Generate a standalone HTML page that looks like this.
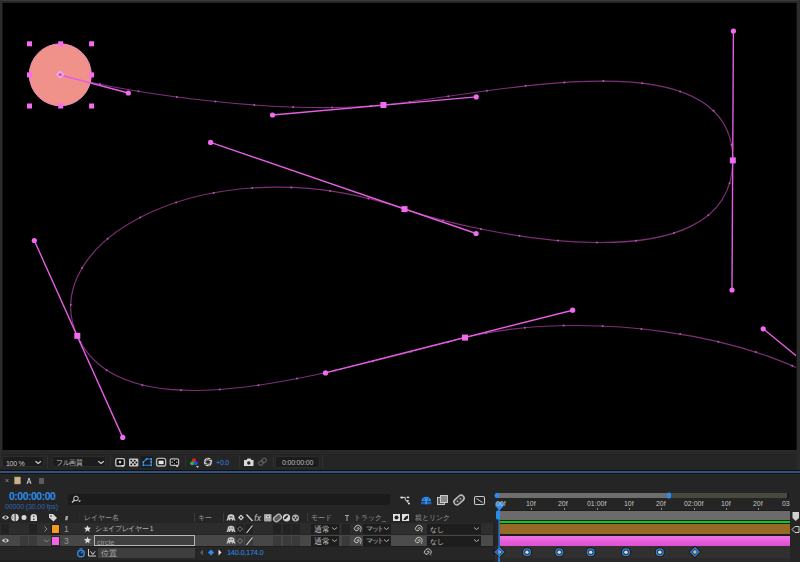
<!DOCTYPE html>
<html><head><meta charset="utf-8">
<style>
*{margin:0;padding:0;box-sizing:border-box}
html,body{width:800px;height:562px;overflow:hidden;background:#252525;font-family:"Liberation Sans",sans-serif;color:#a0a0a0;font-size:9px}
.a{position:absolute}
#vp{left:0;top:0;width:800px;height:450px;background:#262626;border-top:1px solid #393939;border-left:2px solid #2c2c2c;border-right:3px solid #2c2c2c}
#vpin{left:3px;top:3px;width:793px;height:447px;background:#000;box-shadow:-1px 0 0 #161616,1px 0 0 #121212}
svg{position:absolute;left:0;top:0}
.fld{position:absolute;background:#1c1c1c;border:1px solid #2c2c2c;border-radius:2px}
.sep{position:absolute;width:1px;background:#303030}
.t{position:absolute;white-space:nowrap;line-height:1}
</style></head><body>
<div id="vp" class="a"></div>
<div id="vpin" class="a"></div>
<svg width="800" height="450" viewBox="0 0 800 450">
  <defs><clipPath id="c"><rect x="3" y="3" width="793" height="447"/></clipPath></defs>
  <g clip-path="url(#c)">
  <!-- motion path -->
  <path d="M60.5,75 C128.3,93 272.5,115 383.4,105 C476.25,96.9 733.4,31 732.8,160.4 C732,290 476.1,233.5 404.5,209.1 C210.6,142.4 34.3,240.5 77.3,335.8 C122.7,437.4 325.5,372.9 465,337.6 C572.6,310.2 763.2,328.8 850,400" fill="none" stroke="#7e2f78" stroke-width="1.15"/>
  <g fill="#b45aae"><circle cx="100.0" cy="84.1" r="1"/><circle cx="138.3" cy="91.2" r="1"/><circle cx="176.8" cy="96.9" r="1"/><circle cx="215.5" cy="101.5" r="1"/><circle cx="254.3" cy="104.9" r="1"/><circle cx="293.2" cy="107.0" r="1"/><circle cx="332.1" cy="107.5" r="1"/><circle cx="371.0" cy="106.0" r="1"/><circle cx="409.8" cy="101.9" r="1"/><circle cx="448.3" cy="96.3" r="1"/><circle cx="486.9" cy="90.7" r="1"/><circle cx="525.6" cy="85.8" r="1"/><circle cx="564.3" cy="82.4" r="1"/><circle cx="603.3" cy="81.1" r="1"/><circle cx="642.1" cy="83.2" r="1"/><circle cx="680.1" cy="91.4" r="1"/><circle cx="713.5" cy="110.8" r="1"/><circle cx="731.5" cy="144.7" r="1"/><circle cx="729.6" cy="183.2" r="1"/><circle cx="708.3" cy="215.2" r="1"/><circle cx="674.0" cy="233.0" r="1"/><circle cx="635.9" cy="240.7" r="1"/><circle cx="597.0" cy="242.5" r="1"/><circle cx="558.1" cy="240.5" r="1"/><circle cx="519.4" cy="235.8" r="1"/><circle cx="481.0" cy="229.0" r="1"/><circle cx="443.1" cy="220.4" r="1"/><circle cx="405.7" cy="209.5" r="1"/><circle cx="368.4" cy="198.5" r="1"/><circle cx="330.1" cy="191.1" r="1"/><circle cx="291.3" cy="187.5" r="1"/><circle cx="252.4" cy="188.0" r="1"/><circle cx="213.7" cy="192.9" r="1"/><circle cx="176.1" cy="202.4" r="1"/><circle cx="140.2" cy="217.4" r="1"/><circle cx="107.7" cy="238.8" r="1"/><circle cx="82.1" cy="267.9" r="1"/><circle cx="70.8" cy="304.7" r="1"/><circle cx="80.4" cy="342.0" r="1"/><circle cx="106.6" cy="370.3" r="1"/><circle cx="142.4" cy="385.2" r="1"/><circle cx="180.9" cy="390.2" r="1"/><circle cx="219.8" cy="389.5" r="1"/><circle cx="258.5" cy="385.2" r="1"/><circle cx="296.9" cy="378.6" r="1"/><circle cx="335.0" cy="370.5" r="1"/><circle cx="372.9" cy="361.4" r="1"/><circle cx="410.6" cy="351.7" r="1"/><circle cx="448.3" cy="341.9" r="1"/><circle cx="486.2" cy="333.0" r="1"/><circle cx="524.8" cy="327.8" r="1"/><circle cx="563.6" cy="325.6" r="1"/><circle cx="602.7" cy="326.1" r="1"/><circle cx="641.4" cy="328.9" r="1"/><circle cx="680.1" cy="334.1" r="1"/><circle cx="718.3" cy="341.7" r="1"/><circle cx="755.8" cy="352.1" r="1"/><circle cx="792.2" cy="365.8" r="1"/></g>
  <!-- circle -->
  <circle cx="60.3" cy="74.8" r="31" fill="#f0918a" stroke="#f08cc8" stroke-width="1"/>
  <!-- handle lines -->
  <g stroke="#e35ee0" stroke-width="1.4" fill="none">
    <line x1="60.5" y1="75" x2="128.3" y2="93"/>
    <line x1="272.5" y1="115" x2="476.25" y2="96.9"/>
    <line x1="733.4" y1="31" x2="732" y2="290"/>
    <line x1="210.6" y1="142.4" x2="476.1" y2="233.5"/>
    <line x1="34.3" y1="240.5" x2="122.7" y2="437.4"/>
    <line x1="325.5" y1="372.9" x2="572.6" y2="310.2"/>
    <line x1="763.2" y1="328.8" x2="850" y2="400"/>
  </g>
  <g fill="#f26af0">
    <circle cx="128.3" cy="93" r="2.6"/>
    <circle cx="272.5" cy="115" r="2.6"/>
    <circle cx="476.25" cy="96.9" r="2.6"/>
    <circle cx="733.4" cy="31" r="2.6"/>
    <circle cx="732" cy="290" r="2.6"/>
    <circle cx="210.6" cy="142.4" r="2.6"/>
    <circle cx="476.1" cy="233.5" r="2.6"/>
    <circle cx="34.3" cy="240.5" r="2.6"/>
    <circle cx="122.7" cy="437.4" r="2.6"/>
    <circle cx="325.5" cy="372.9" r="2.6"/>
    <circle cx="572.6" cy="310.2" r="2.6"/>
    <circle cx="763.2" cy="328.8" r="2.6"/>
    <rect x="380.4" y="102" width="6" height="6"/>
    <rect x="729.8" y="157.4" width="6" height="6"/>
    <rect x="401.5" y="206.1" width="6" height="6"/>
    <rect x="74.3" y="332.8" width="6" height="6"/>
    <rect x="462" y="334.6" width="6" height="6"/>
  </g>
  <!-- bbox handles -->
  <g fill="#f56cf2">
    <rect x="27" y="41.3" width="5" height="5"/>
    <rect x="58.2" y="41.3" width="5" height="5"/>
    <rect x="89.1" y="41.3" width="5" height="5"/>
    <rect x="27" y="72.4" width="5" height="5"/>
    <rect x="89.1" y="72.4" width="5" height="5"/>
    <rect x="27" y="103.5" width="5" height="5"/>
    <rect x="58.2" y="103.5" width="5" height="5"/>
    <rect x="89.1" y="103.5" width="5" height="5"/>
  </g>
  <path d="M60.2,70.6 l4,4 l-4,4 l-4,-4 z" fill="#eab0ee" stroke="#e8a0e8" stroke-width="0.6" stroke-linejoin="round"/><circle cx="60.2" cy="74.6" r="1.6" fill="#c84cc8"/>
  </g>
</svg>

<!-- viewer toolbar -->
<div class="a" style="left:0;top:450px;width:800px;height:21px;background:#252525;border-top:4px solid #282828"></div>
<div class="a" style="left:0;top:454px;width:800px;height:1px;background:#222"></div>
<div class="a" style="left:0;top:470px;width:800px;height:1px;background:#150e0a"></div>
<div class="a" style="left:0;top:473px;width:800px;height:1px;background:#16120e"></div>
<div class="a" style="left:0;top:450px;width:2px;height:18px;background:#2b2b2b"></div>
<div class="fld" style="left:2px;top:456px;width:42px;height:11px"></div>
<div class="t" style="left:6px;top:460px;font-size:7px;letter-spacing:-0.3px;color:#c8c8c8">100 %</div>
<div class="fld" style="left:52px;top:456px;width:54px;height:11px"></div>
<div class="t" style="left:56px;top:459px;font-size:7px;letter-spacing:-0.3px;color:#c8c8c8">フル画質</div>
<div class="a" style="left:141px;top:456px;width:12px;height:12px;background:#1b1b1b;border-radius:2px"></div>
<div class="t" style="left:216px;top:459px;font-size:7px;color:#2d8ceb;letter-spacing:-0.2px">+0.0</div>
<div class="fld" style="left:275px;top:456px;width:45px;height:12px"></div>
<div class="t" style="left:282px;top:459px;font-size:7px;color:#bdbdbd;letter-spacing:-0.2px">0:00:00:00</div>
<div class="a" style="left:0;top:471px;width:800px;height:2px;background:#2b5386"></div>

<!-- timeline panel top -->
<div class="t" style="left:9px;top:491px;font-size:10.5px;font-weight:bold;color:#2d8ceb;letter-spacing:-0.5px">0:00:00:00</div>
<div class="t" style="left:5px;top:503px;font-size:7.2px;color:#2a66b0;letter-spacing:-0.2px">00000 (30.00 fps)</div>
<div class="a" style="left:68px;top:494px;width:322px;height:11px;background:#1b1b1b;border-radius:2px"></div>

<!-- layer table header -->
<div class="t" style="left:84px;top:514px;font-size:7px;color:#9a9a9a">レイヤー名</div>
<div class="t" style="left:198px;top:514px;font-size:7px;color:#9a9a9a">キー</div>
<div class="t" style="left:311px;top:514px;font-size:7px;color:#9a9a9a">モード</div>
<div class="t" style="left:354px;top:514px;font-size:7px;color:#9a9a9a">トラック_</div>
<div class="t" style="left:415px;top:514px;font-size:7px;color:#9a9a9a">親とリンク</div>

<!-- row 1 -->
<div class="a" style="left:0;top:523px;width:493px;height:11px;background:#2c2c2c"></div>
<div class="a" style="left:1px;top:524px;width:8px;height:10px;background:#222"></div>
<div class="a" style="left:29px;top:524px;width:8px;height:10px;background:#222"></div>
<div class="a" style="left:51px;top:524px;width:9px;height:10px;background:#f29b1e;border:1px solid #1a1a1a"></div>
<div class="t" style="left:64px;top:525px;font-size:8.5px;color:#9a9a9a">1</div>
<div class="t" style="left:95px;top:526px;font-size:6.8px;letter-spacing:-0.35px;color:#b8b8b8">シェイプレイヤー 1</div>
<div class="a" style="left:236px;top:524px;width:8px;height:10px;background:#222"></div>
<div class="a" style="left:245px;top:524px;width:8px;height:10px;background:#222"></div>
<div class="a" style="left:273px;top:524px;width:8px;height:10px;background:#222"></div>
<div class="a" style="left:283px;top:524px;width:8px;height:10px;background:#222"></div>
<div class="a" style="left:292px;top:524px;width:8px;height:10px;background:#222"></div>
<div class="a" style="left:311px;top:524px;width:28px;height:10px;background:#1d1d1d"></div>
<div class="t" style="left:314px;top:525.5px;font-size:7.5px;color:#c0c0c0">通常</div>
<div class="a" style="left:342px;top:524px;width:8px;height:10px;background:#222"></div>
<div class="a" style="left:363px;top:524px;width:28px;height:10px;background:#1d1d1d"></div>
<div class="t" style="left:366px;top:525px;font-size:7px;letter-spacing:-1.5px;color:#c0c0c0">マット</div>
<div class="a" style="left:391px;top:524px;width:35px;height:10px;background:#2f2f2f"></div>
<div class="a" style="left:427px;top:524px;width:54px;height:10px;background:#1d1d1d"></div>
<div class="t" style="left:430px;top:526px;font-size:7px;color:#c0c0c0">なし</div>
<div class="a" style="left:481px;top:524px;width:12px;height:10px;background:#2e2e2e"></div>

<!-- row 2 -->
<div class="a" style="left:0;top:535px;width:493px;height:11px;background:#474747"></div>
<div class="a" style="left:20px;top:536px;width:8px;height:10px;background:#3a3a3a"></div>
<div class="a" style="left:29px;top:536px;width:8px;height:10px;background:#3a3a3a"></div>
<div class="a" style="left:51px;top:536px;width:9px;height:10px;background:#f066e6;border:1px solid #2a2a2a"></div>
<div class="t" style="left:64px;top:537px;font-size:8.5px;color:#9a9a9a">3</div>
<div class="a" style="left:94px;top:535px;width:101px;height:11px;border:1px solid #b8b8b8;background:#404040"></div>
<div class="t" style="left:97px;top:538.5px;font-size:7.5px;color:#9a9a9a">circle</div>
<div class="a" style="left:236px;top:536px;width:8px;height:10px;background:#3a3a3a"></div>
<div class="a" style="left:245px;top:536px;width:8px;height:10px;background:#3a3a3a"></div>
<div class="a" style="left:273px;top:536px;width:8px;height:10px;background:#3a3a3a"></div>
<div class="a" style="left:283px;top:536px;width:8px;height:10px;background:#3a3a3a"></div>
<div class="a" style="left:292px;top:536px;width:8px;height:10px;background:#3a3a3a"></div>
<div class="a" style="left:311px;top:536px;width:28px;height:10px;background:#1d1d1d"></div>
<div class="t" style="left:314px;top:537.5px;font-size:7.5px;color:#c0c0c0">通常</div>
<div class="a" style="left:342px;top:536px;width:8px;height:10px;background:#3a3a3a"></div>
<div class="a" style="left:363px;top:536px;width:28px;height:10px;background:#1d1d1d"></div>
<div class="t" style="left:366px;top:537px;font-size:7px;letter-spacing:-1.5px;color:#c0c0c0">マット</div>
<div class="a" style="left:391px;top:536px;width:35px;height:10px;background:#4c4c4c"></div>
<div class="a" style="left:427px;top:536px;width:54px;height:10px;background:#1d1d1d"></div>
<div class="t" style="left:430px;top:538px;font-size:7px;color:#c0c0c0">なし</div>
<div class="a" style="left:481px;top:536px;width:12px;height:10px;background:#4a4a4a"></div>

<!-- row 3 -->
<div class="a" style="left:0;top:546px;width:493px;height:14px;background:#262626;border-top:1px solid #1e1e1e"></div>
<div class="a" style="left:0;top:560px;width:493px;height:2px;background:#1f1f1f"></div>
<div class="a" style="left:98px;top:548px;width:97px;height:10px;background:#3e3e3e"></div>
<div class="t" style="left:101px;top:550px;font-size:7.5px;color:#b8b8b8">位置</div>
<div class="t" style="left:227px;top:549px;font-size:7.5px;color:#2d8ceb;letter-spacing:-0.3px">140.0,174.0</div>

<!-- timeline -->
<div class="a" style="left:493px;top:523px;width:3px;height:39px;background:#222"></div>
<div class="a" style="left:499px;top:493px;width:170px;height:5px;background:#6e6e6e"></div>
<div class="a" style="left:669px;top:493px;width:118px;height:5px;background:#4a4740"></div>
<div class="a" style="left:787px;top:493px;width:2px;height:6px;background:#1a1a1a"></div>
<div class="a" style="left:500px;top:510px;width:290px;height:37px;background:#1b1e1b"></div>
<div class="a" style="left:500px;top:511px;width:290px;height:9px;background:#6b6b6b"></div>
<div class="a" style="left:500px;top:521px;width:290px;height:2px;background:#0bcc1a"></div>
<div class="a" style="left:500px;top:524px;width:290px;height:10px;background:#976826"></div>
<div class="a" style="left:500px;top:536px;width:290px;height:10px;background:linear-gradient(#ee74e6,#e45ad6 60%,#e050d6)"></div>
<div class="a" style="left:495px;top:546px;width:295px;height:12px;background:#303030"></div>
<div class="a" style="left:495px;top:558px;width:295px;height:4px;background:#2a2a2a"></div>
<div class="a" style="left:790px;top:474px;width:10px;height:88px;background:#252525"></div>
<div class="a" style="left:797px;top:450px;width:3px;height:20px;background:#2a2a2a"></div>
<div class="t" style="left:496px;top:499.5px;font-size:8px;color:#c4c4c4;letter-spacing:0;transform:scaleX(0.87);transform-origin:0 0;z-index:2">00f</div>
<div class="t" style="left:526px;top:499.5px;font-size:8px;color:#c4c4c4;letter-spacing:0;transform:scaleX(0.87);transform-origin:0 0">10f</div>
<div class="t" style="left:558px;top:499.5px;font-size:8px;color:#c4c4c4;letter-spacing:0;transform:scaleX(0.87);transform-origin:0 0">20f</div>
<div class="t" style="left:587px;top:499.5px;font-size:8px;color:#c4c4c4;letter-spacing:0;transform:scaleX(0.87);transform-origin:0 0">01:00f</div>
<div class="t" style="left:624px;top:499.5px;font-size:8px;color:#c4c4c4;letter-spacing:0;transform:scaleX(0.87);transform-origin:0 0">10f</div>
<div class="t" style="left:656px;top:499.5px;font-size:8px;color:#c4c4c4;letter-spacing:0;transform:scaleX(0.87);transform-origin:0 0">20f</div>
<div class="t" style="left:684px;top:499.5px;font-size:8px;color:#c4c4c4;letter-spacing:0;transform:scaleX(0.87);transform-origin:0 0">02:00f</div>
<div class="t" style="left:721px;top:499.5px;font-size:8px;color:#c4c4c4;letter-spacing:0;transform:scaleX(0.87);transform-origin:0 0">10f</div>
<div class="t" style="left:753px;top:499.5px;font-size:8px;color:#c4c4c4;letter-spacing:0;transform:scaleX(0.87);transform-origin:0 0">20f</div>
<div class="t" style="left:782px;top:499.5px;font-size:8px;color:#c4c4c4;letter-spacing:0;transform:scaleX(0.87);transform-origin:0 0">03</div>

<svg width="800" height="112" viewBox="0 450 800 112" style="top:450px">
  <!-- separators toolbar -->
  <g fill="#303030">
    <rect x="47" y="455" width="1" height="13"/><rect x="110" y="455" width="1" height="13"/><rect x="185" y="455" width="1" height="13"/>
    <rect x="239" y="455" width="1" height="13"/><rect x="273" y="455" width="1" height="13"/>
    <rect x="322" y="455" width="1" height="13"/>
  </g>
  <g stroke="#d0d0d0" fill="none" stroke-width="1.15">
    <!-- dropdown chevrons -->
    <path d="M35.5,461.3 l2.7,2.2 l2.7,-2.2"/>
    <path d="M98.3,461.3 l2.7,2.2 l2.7,-2.2"/>
  </g>
  <rect x="115.8" y="458.6" width="8.6" height="7.4" rx="1.6" fill="#0c0c0c" stroke="#c4c4c4" stroke-width="1.4"/>
  <path d="M120,460.5 l1.6,1.6 l-1.6,1.6 l-1.6,-1.6 z" fill="#e0e0e0"/>
  <path d="M121,465 h3.6 l-1.8,2.1 z" fill="#e8e8e8"/>
  <rect x="129" y="458.5" width="9.3" height="8" rx="1.2" fill="#c8c8c8"/>
  <g fill="#0c0c0c"><circle cx="131.3" cy="460.6" r="0.95"/><circle cx="134.8" cy="460.6" r="0.95"/><circle cx="133" cy="462.5" r="0.95"/><circle cx="136.5" cy="462.5" r="0.95"/><circle cx="131.3" cy="464.4" r="0.95"/><circle cx="134.8" cy="464.4" r="0.95"/></g>
  <path d="M143.3,465.3 v-3.3 l3.3,-3 h4.6 v6.3 z" fill="none" stroke="#2d8ceb" stroke-width="1.1"/>
  <g fill="#3f9af5"><circle cx="143.3" cy="462" r="0.9"/><circle cx="146.6" cy="459" r="0.9"/><circle cx="151.2" cy="459" r="0.9"/><circle cx="151.2" cy="462" r="0.9"/><circle cx="151.2" cy="465.3" r="0.9"/><circle cx="143.3" cy="465.3" r="0.9"/></g>
  <rect x="156.6" y="458.4" width="9" height="7.6" rx="1.8" fill="#0c0c0c" stroke="#b8b8b8" stroke-width="1.4"/>
  <rect x="158.6" y="460.6" width="5" height="3.6" fill="#e8e8e8"/>
  <rect x="170.2" y="458.8" width="8.4" height="6.6" rx="1.5" fill="#0c0c0c" stroke="#c0c0c0" stroke-width="1.2"/>
  <path d="M171.5,462.1 h1.5 M176,462.1 h1.5 M174.4,460 v1 M174.4,463.3 v1" stroke="#d8d8d8" stroke-width="1"/>
  <path d="M175.6,465.6 h3 l-1.5,1.8 z" fill="#e0e0e0"/>
  <!-- rgb -->
  <circle cx="194" cy="460.3" r="2" fill="#e02020"/>
  <circle cx="192.2" cy="463.3" r="2" fill="#20c030"/>
  <circle cx="195.8" cy="463.3" r="2" fill="#2050e0"/>
  <path d="M196,466 h3 l-1.5,2 z" fill="#d0d0d0"/>
  <!-- aperture -->
  <circle cx="208" cy="462" r="4.2" fill="#d4d4d4"/>
  <polygon points="209.82,463.05 208.00,464.10 206.18,463.05 206.18,460.95 208.00,459.90 209.82,460.95" fill="#252525"/>
  <path d="M209.82,463.05 L208.69,465.94 M208.00,464.10 L204.94,464.57 M206.18,463.05 L204.24,460.63 M206.18,460.95 L207.31,458.06 M208.00,459.90 L211.06,459.43 M209.82,460.95 L211.76,463.37 " stroke="#252525" stroke-width="0.7"/>
  <!-- camera -->
  <path d="M244,460 h2.5 l1,-1.5 h3 l1,1.5 h2 v6 h-9.5 z" fill="#d8d8d8"/>
  <circle cx="248.8" cy="463" r="1.7" fill="#232323"/>
  <!-- link icon dim -->
  <g stroke="#5a5a5a" fill="none" stroke-width="1.2">
    <rect x="258.5" y="461" width="5" height="4" rx="2" transform="rotate(-35 261 463)"/>
    <rect x="261.5" y="458.5" width="5" height="4" rx="2" transform="rotate(-35 264 460.5)"/>
  </g>

  <!-- tabs row -->
  <path d="M5.5,479 l3,3 M8.5,479 l-3,3" stroke="#8a8a8a" stroke-width="0.9"/>
  <rect x="14.5" y="477" width="6" height="7" fill="#cbb48c" stroke="#a89070" stroke-width="0.5"/>
  <path d="M27,484 l2,-6 l2,6 M27.8,482 h2.4" stroke="#c8c8c8" stroke-width="1" fill="none"/>
  <rect x="39" y="478" width="5" height="6" fill="#5c5c5c"/>

  <!-- search -->
  <circle cx="76" cy="498.5" r="2.3" fill="none" stroke="#d0d0d0" stroke-width="1"/>
  <path d="M74.5,500 l-2.5,2.5" stroke="#d0d0d0" stroke-width="1.2"/>
  <path d="M78,500.5 h3 l-1.5,1.8 z" fill="#d0d0d0"/>

  <!-- timeline header icons -->
  <g fill="#e0e0e0"><ellipse cx="401.8" cy="497.4" rx="1.6" ry="1"/><ellipse cx="408" cy="497.3" rx="1.4" ry="0.9"/><ellipse cx="407.6" cy="500.8" rx="1.4" ry="0.9"/><circle cx="409" cy="503.5" r="1"/></g>
  <path d="M403,497.4 h2.5 M405.3,497.8 q-0.8,2.8 1.5,3 M407,501.4 l1.5,1.8" stroke="#d0d0d0" stroke-width="1" fill="none"/>
  <path d="M421.3,501.3 a4.9,4.6 0 0 1 9.8,0 z" fill="#2d8ceb"/>
  <rect x="421" y="502" width="10.4" height="2.3" fill="#1f64b4"/>
  <rect x="425.4" y="499" width="1.7" height="5.3" fill="#3a98f5"/>
  <circle cx="424" cy="499.2" r="0.6" fill="#1a3c66"/><circle cx="428.5" cy="499.2" r="0.6" fill="#1a3c66"/>
  <rect x="437.5" y="497.5" width="7" height="7" fill="#5a5a5a" stroke="#c8c8c8" stroke-width="1"/>
  <rect x="440.5" y="495.5" width="7" height="7" fill="#8a8a8a" stroke="#c8c8c8" stroke-width="1"/>
  <rect x="453.2" y="497" width="11.6" height="6" rx="3" transform="rotate(-42 459 500)" fill="#3a3a3a" stroke="#c0c0c0" stroke-width="1.4"/><circle cx="457.5" cy="501.2" r="0.8" fill="#c0c0c0"/><circle cx="460.5" cy="498.8" r="0.8" fill="#c0c0c0"/>
  <rect x="474.5" y="496.5" width="10" height="8" rx="1.5" fill="none" stroke="#c8c8c8" stroke-width="1.1"/>
  <path d="M476.5,498.5 l6,4" stroke="#c8c8c8" stroke-width="1"/>

  <!-- layer header icons -->
  <g fill="#d8d8d8">
    <path d="M2,517.5 q3.5,-4 7,0 q-3.5,4 -7,0 z"/>
    <circle cx="15" cy="517.5" r="3.8"/>
    <circle cx="24" cy="517.5" r="2.5"/>
    <path d="M30.6,521 v-3.6 a3.2,3.3 0 0 1 6.4,0 v3.6 z"/>
    <path d="M49,514 h4 l4,4 l-3.5,3.5 l-4.5,-4 z"/>
  </g>
  <circle cx="5.5" cy="517.5" r="1.3" fill="#232323"/>
  <rect x="14.6" y="513.5" width="1" height="8" fill="#232323"/><path d="M11.2,517.5 l2,-2 v4 z" fill="#999"/>
  <circle cx="33.8" cy="516.2" r="0.8" fill="#232323"/><circle cx="33.8" cy="519.2" r="0.8" fill="#232323"/>
  <circle cx="51" cy="516" r="0.8" fill="#232323"/>
  <path d="M65.8,516 h2.4 l-0.8,4.2 h-2.4 z" fill="#a8a8a8"/>
  <g fill="#3a3a3a"><rect x="79" y="513" width="1" height="9" fill="#2a2a2a"/><rect x="194" y="513" width="1" height="9"/><rect x="223" y="513" width="1" height="9"/><rect x="307" y="513" width="1" height="9"/></g>

  <!-- switch header icons -->
  <g fill="#d0d0d0">
    <path d="M227.5,517.2 a3.5,3 0 0 1 7,0 v1 l1.2,2.2 h-1.6 l-1.1,-1.4 v1.4 h-1.3 v-1.4 h-1.4 v1.4 h-1.3 v-1.4 l-1.1,1.4 h-1.6 l1.2,-2.2 z"/>
    <path d="M241,514.5 l3,3 l-3,3 l-3,-3 z"/>
    <rect x="264" y="514" width="7.5" height="7.5" rx="1" fill="#a4a4a4"/>
    <circle cx="286.5" cy="517.8" r="3.7"/>
    <circle cx="295.5" cy="518" r="3.5" fill="#b4b4b4"/>
  </g>
  <circle cx="241" cy="517.5" r="1" fill="#232323"/>
  <rect x="266" y="515.5" width="4" height="2.5" fill="#d8d8d8"/><rect x="267" y="516.2" width="2" height="1" fill="#555"/>
  <ellipse cx="286" cy="517.3" rx="2.6" ry="1.1" transform="rotate(-45 286 517.3)" fill="#1e1e1e"/>
  <circle cx="294" cy="517.5" r="0.9" fill="#232323"/><circle cx="297" cy="517.5" r="0.9" fill="#232323"/><circle cx="295.5" cy="519.5" r="0.9" fill="#232323"/>
  <path d="M246.5,514.5 l6,6.5" stroke="#d0d0d0" stroke-width="1.4"/>
  <text x="254.3" y="521" font-family="Liberation Sans" font-style="italic" font-size="8.5" fill="#c8c8c8">fx</text>
  <rect x="273.3" y="515.3" width="8.4" height="5.4" rx="2.7" transform="rotate(-40 277.5 518)" fill="#5a5a5a" stroke="#b8b8b8" stroke-width="1.3"/>

  <!-- mode/track header icons -->
  <path d="M345,515.5 h4 M347,515.5 v5.5" stroke="#b8b8b8" stroke-width="0.9"/>
  <rect x="393" y="514" width="7" height="7" fill="#e0e0e0"/><circle cx="396.5" cy="517.5" r="2" fill="#232323"/>
  <rect x="402" y="514" width="7" height="7" fill="#e0e0e0"/><path d="M403.5,520 q1,-4 4.5,-4.5 v3 q-2,0 -2,1.5 z" fill="#232323"/>

  <!-- row icons: chevrons -->
  <path d="M44.5,526.5 l2.5,2.5 l-2.5,2.5" stroke="#8a8a8a" stroke-width="1" fill="none"/>
  <path d="M44,539.5 l2.5,2.5 l2.5,-2.5" stroke="#8a8a8a" stroke-width="1" fill="none"/>
  <!-- stars -->
  <g fill="#dcdcdc">
    <path d="M87.5,525.2 l1,2.4 l2.6,0.2 l-2,1.7 l0.6,2.5 l-2.2,-1.4 l-2.2,1.4 l0.6,-2.5 l-2,-1.7 l2.6,-0.2 z"/>
    <path d="M87.5,536.7 l1,2.4 l2.6,0.2 l-2,1.7 l0.6,2.5 l-2.2,-1.4 l-2.2,1.4 l0.6,-2.5 l-2,-1.7 l2.6,-0.2 z"/>
  </g>
  <!-- eye row2 -->
  <path d="M2,540.5 q3.5,-4 7,0 q-3.5,4 -7,0 z" fill="#d8d8d8"/><circle cx="5.5" cy="540.5" r="1.3" fill="#474747"/>
  <!-- row switch icons -->
  <g fill="#c8c8c8">
    <path d="M227.5,528.7 a3.5,3 0 0 1 7,0 v1 l1.2,2.2 h-1.6 l-1.1,-1.4 v1.4 h-1.3 v-1.4 h-1.4 v1.4 h-1.3 v-1.4 l-1.1,1.4 h-1.6 l1.2,-2.2 z"/>
    <path d="M227.5,540.2 a3.5,3 0 0 1 7,0 v1 l1.2,2.2 h-1.6 l-1.1,-1.4 v1.4 h-1.3 v-1.4 h-1.4 v1.4 h-1.3 v-1.4 l-1.1,1.4 h-1.6 l1.2,-2.2 z"/>
  </g>
  <g stroke="#8a8a8a" stroke-width="0.9" fill="none">
    <path d="M240,526.5 l2.5,2.5 l-2.5,2.5 l-2.5,-2.5 z"/>
    <path d="M240,538.5 l2.5,2.5 l-2.5,2.5 l-2.5,-2.5 z"/>
  </g>
  <g stroke="#d8d8d8" stroke-width="1.1">
    <path d="M246.5,533 l6,-7.5"/><path d="M246.5,545 l6,-7.5"/>
  </g>
  <!-- mode chevrons -->
  <g stroke="#c0c0c0" stroke-width="0.9" fill="none">
    <path d="M332,527.5 l2.5,2 l2.5,-2"/><path d="M332,539.5 l2.5,2 l2.5,-2"/>
    <path d="M384,527.5 l2.5,2 l2.5,-2"/><path d="M384,539.5 l2.5,2 l2.5,-2"/>
    <path d="M474,527.5 l2.5,2 l2.5,-2"/><path d="M474,539.5 l2.5,2 l2.5,-2"/>
  </g>
  <!-- spirals -->
  <g stroke="#c8c8c8" stroke-width="1" fill="none">
    <path d="M357.2,528.8 a1,1 0 1 1 1.2,0.8 a2.1,2.1 0 1 1 -3.3,-2.5 a3.2,3.2 0 1 1 5,3.8 l0.8,0.8"/>
    <path d="M357.2,540.8 a1,1 0 1 1 1.2,0.8 a2.1,2.1 0 1 1 -3.3,-2.5 a3.2,3.2 0 1 1 5,3.8 l0.8,0.8"/>
    <path d="M418.2,528.8 a1,1 0 1 1 1.2,0.8 a2.1,2.1 0 1 1 -3.3,-2.5 a3.2,3.2 0 1 1 5,3.8 l0.8,0.8"/>
    <path d="M418.2,540.8 a1,1 0 1 1 1.2,0.8 a2.1,2.1 0 1 1 -3.3,-2.5 a3.2,3.2 0 1 1 5,3.8 l0.8,0.8"/>
    <path d="M427.2,552.3 a1,1 0 1 1 1.2,0.8 a2.1,2.1 0 1 1 -3.3,-2.5 a3.2,3.2 0 1 1 5,3.8 l0.8,0.8"/>
  </g>
  <!-- row3 icons -->
  <circle cx="81" cy="553.5" r="3.3" fill="none" stroke="#2d8ceb" stroke-width="1.4"/>
  <path d="M81,553.5 l1.8,-1.8 M79.5,548.7 h3" stroke="#2d8ceb" stroke-width="1.1"/>
  <path d="M88.5,549 v7 h7.5 M90.5,551.3 l2.3,3.2 l2.3,-3.2" stroke="#d0d0d0" stroke-width="1" fill="none"/>
  <path d="M203,549.5 v6 l-3,-3 z" fill="#5a5a5a"/>
  <path d="M211,549.5 l3,3 l-3,3 l-3,-3 z" fill="#2d8ceb"/>
  <path d="M218.5,549.5 v6 l3,-3 z" fill="#e0e0e0"/>

  <!-- timeline navigator handles -->
  <path d="M499,493 v5 h-2 a2.5,2.5 0 0 1 0,-5 z" fill="#2d8ceb"/>
  <rect x="667" y="492.5" width="4" height="6" rx="1.5" fill="#2d8ceb"/>
  <!-- ticks -->
  <g fill="#8a8a8a">
    <rect x="531" y="508" width="1" height="2"/><rect x="564" y="508" width="1" height="2"/><rect x="597" y="508" width="1" height="2"/>
    <rect x="629" y="508" width="1" height="2"/><rect x="661" y="508" width="1" height="2"/><rect x="694" y="508" width="1" height="2"/>
    <rect x="726" y="508" width="1" height="2"/><rect x="758" y="508" width="1" height="2"/>
  </g>
  <!-- work area left handle -->
  <path d="M496,512 a1.5,1.5 0 0 1 1.5,-1.5 h2.5 v9 h-2.5 a1.5,1.5 0 0 1 -1.5,-1.5 z" fill="#2d8ceb"/>
  <!-- CTI -->
  <rect x="498.5" y="505" width="1.2" height="57" fill="#2d8ceb"/>
  <path d="M495.3,503.5 q0,-1.5 1.5,-1.5 h5.4 q1.5,0 1.5,1.5 v2.5 l-4.2,4.5 l-4.2,-4.5 z" fill="#2d8ceb"/>
  <!-- right column icons -->
  <path d="M792.5,512 h6.5 v6 l-3.25,3 l-3.25,-3 z" fill="#d0d0d0"/>
  <path d="M792,529.5 l3,-3 h4 v6 h-4 z" fill="none" stroke="#d0d0d0" stroke-width="1"/>
  <!-- keyframes -->
  <g stroke="#1c1610" stroke-width="2.6" fill="none">
    <path d="M499.5,547.5 l4.5,4.5 l-4.5,4.5 l-4.5,-4.5 z"/>
    <circle cx="527" cy="552.3" r="3.7"/><circle cx="559.3" cy="552.3" r="3.7"/><circle cx="590.7" cy="552.3" r="3.7"/>
    <circle cx="626" cy="552.3" r="3.7"/><circle cx="659.8" cy="552.3" r="3.7"/>
    <path d="M694.9,547.5 l4.5,4.5 l-4.5,4.5 l-4.5,-4.5 z"/>
  </g>
  <g stroke="#2d86e6" stroke-width="1.3" fill="#2e2e2e">
    <path d="M499.5,547.8 l4.2,4.2 l-4.2,4.2 l-4.2,-4.2 z"/>
    <circle cx="527" cy="552.3" r="3.4"/><circle cx="559.3" cy="552.3" r="3.4"/><circle cx="590.7" cy="552.3" r="3.4"/>
    <circle cx="626" cy="552.3" r="3.4"/><circle cx="659.8" cy="552.3" r="3.4"/>
    <path d="M694.9,547.8 l4.2,4.2 l-4.2,4.2 l-4.2,-4.2 z"/>
  </g>
  <g fill="#d8d8d8">
    <circle cx="527" cy="552.3" r="1.7"/><circle cx="559.3" cy="552.3" r="1.8"/><circle cx="590.7" cy="552.3" r="1.8"/>
    <circle cx="626" cy="552.3" r="1.8"/><circle cx="659.8" cy="552.3" r="1.8"/>
    <path d="M694.9,549.8 l2.2,2.2 l-2.2,2.2 l-2.2,-2.2 z" fill="#b8b8b8"/><path d="M499.5,549.8 l2.2,2.2 l-2.2,2.2 l-2.2,-2.2 z" fill="#b8b8b8"/>
  </g>
  <rect x="498.5" y="546" width="1.2" height="16" fill="#2d8ceb" opacity="0.8"/>
  <g fill="#2a2a2a"><rect x="229.3" y="516.4" width="3.4" height="1.1" rx="0.5"/><circle cx="229.8" cy="528" r="0.6"/><circle cx="232.2" cy="528" r="0.6"/><circle cx="229.8" cy="539.5" r="0.6"/><circle cx="232.2" cy="539.5" r="0.6"/></g>
</svg>
</body></html>
